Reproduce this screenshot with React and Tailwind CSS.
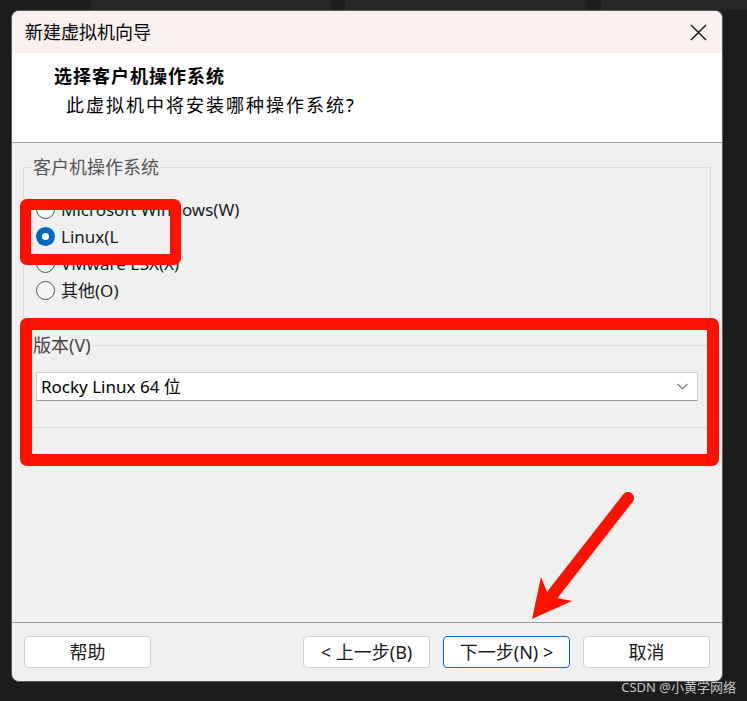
import React from "react";

const latin = { fontFamily: '"Noto Sans", "Noto Sans CJK SC", sans-serif' };

const Radio = ({ checked, label }) => (
  <div className="flex items-center h-[27px]">
    {checked ? (
      <span className="w-[19px] h-[19px] rounded-full bg-[#0067c0] flex items-center justify-center">
        <span className="w-[7px] h-[7px] rounded-full bg-white" />
      </span>
    ) : (
      <span className="w-[19px] h-[19px] rounded-full border border-[#5a5a5a] bg-[#f5f5f5]" />
    )}
    <span className="ml-[6px] text-[17px] text-[#1a1a1a] leading-none">{label}</span>
  </div>
);

const Button = ({ children, primary }) => (
  <button
    className={
      "w-[127px] h-[32px] rounded-[4px] bg-white text-[18px] text-[#1a1a1a] flex items-center justify-center " +
      (primary ? "border border-[#0067c0]" : "border border-[#d0d0d0]")
    }
  >
    {children}
  </button>
);

export default function App() {
  return (
    <div className="relative w-[747px] h-[701px] bg-[#1c1c1c] overflow-hidden flex flex-col" style={latin}>
      {/* windows behind */}
      <div className="flex h-[10px]">
        <div className="w-[90px] bg-[#1d1d1d]" />
        <div className="w-[241px] bg-[#262626]" />
        <div className="w-[14px] bg-[#1d1d1d]" />
        <div className="w-[241px] bg-[#262626]" />
        <div className="w-[15px] bg-[#1d1d1d]" />
        <div className="flex-1 bg-[#262626]" />
      </div>

      {/* dialog */}
      <div className="ml-[11px] w-[712px] h-[672px] rounded-[8px] border border-[#5c5c5c] bg-[#f0f0f0] overflow-hidden flex flex-col">
        <div className="h-[42px] bg-[#f9f0f0] flex items-center justify-between pl-[13px] pr-[15px]">
          <span className="text-[18px] text-black">新建虚拟机向导</span>
          <svg width="17" height="17" viewBox="0 0 17 17">
            <path d="M1 1L16 16M16 1L1 16" stroke="#111" strokeWidth="1.4" />
          </svg>
        </div>

        <div className="h-[90px] bg-white border-b border-[#a0a0a0] pt-[12px] pl-[42px]">
          <div className="text-[18px] font-bold text-black leading-[22px] tracking-[1px]">选择客户机操作系统</div>
          <div className="mt-[7px] ml-[12px] text-[18px] text-black leading-[22px] tracking-[2px]">此虚拟机中将安装哪种操作系统?</div>
        </div>

        <div className="flex-1 px-[11px] pt-[13px]">
          <fieldset className="border border-[#dcdcdc] h-[163px]">
            <legend className="ml-[8px] px-[1px] text-[18px] text-[#555] leading-[22px]">客户机操作系统</legend>
            <div className="mt-[18px] pl-[12px] flex flex-col">
              <Radio label="Microsoft Windows(W)" />
              <Radio checked label="Linux(L" />
              <Radio label="VMware ESX(X)" />
              <Radio label="其他(O)" />
            </div>
          </fieldset>

          <fieldset className="mt-[15px] border border-[#dcdcdc] pb-[26px]">
            <legend className="ml-[8px] px-[1px] text-[18px] text-[#444] leading-[22px]">版本(V)</legend>
            <div className="mt-[16px] mx-[12px] h-[29px] bg-white border border-[#d0d0d0] border-b-[#9a9a9a] flex items-center justify-between pl-[4px] pr-[9px]">
              <span className="text-[17px] text-black">Rocky Linux 64 位</span>
              <svg width="11" height="7" viewBox="0 0 11 7">
                <path d="M0.5 0.8L5.5 5.8L10.5 0.8" stroke="#666" strokeWidth="1.1" fill="none" />
              </svg>
            </div>
          </fieldset>
        </div>

        <div className="h-[59px] border-t border-[#a0a0a0] flex items-start pt-[13px] px-[12px]">
          <Button>帮助</Button>
          <div className="flex-1" />
          <div className="flex gap-[13px]">
            <Button>&lt; 上一步(B)</Button>
            <Button primary>下一步(N) &gt;</Button>
            <Button>取消</Button>
          </div>
        </div>
      </div>

      {/* annotations */}
      <div className="absolute left-[20px] top-[199px] w-[161px] h-[66px] border-[11px] border-[#ff1100] rounded-[7px]" />
      <div className="absolute left-[20px] top-[318px] w-[699px] h-[148px] border-[12px] border-[#ff1100] rounded-[7px]" />
      <svg className="absolute left-0 top-0 pointer-events-none" width="747" height="701" viewBox="0 0 747 701">
        <line x1="628" y1="498" x2="553" y2="594" stroke="#ff1100" strokeWidth="12" strokeLinecap="round" />
        <polygon points="532,619 541,577 547,592 557,598 572,601" fill="#ff1100" />
      </svg>

      <div className="absolute right-[11px] top-[679px] text-[13px] text-[#c4c4c4] leading-[16px]">CSDN @小黄学网络</div>
    </div>
  );
}
